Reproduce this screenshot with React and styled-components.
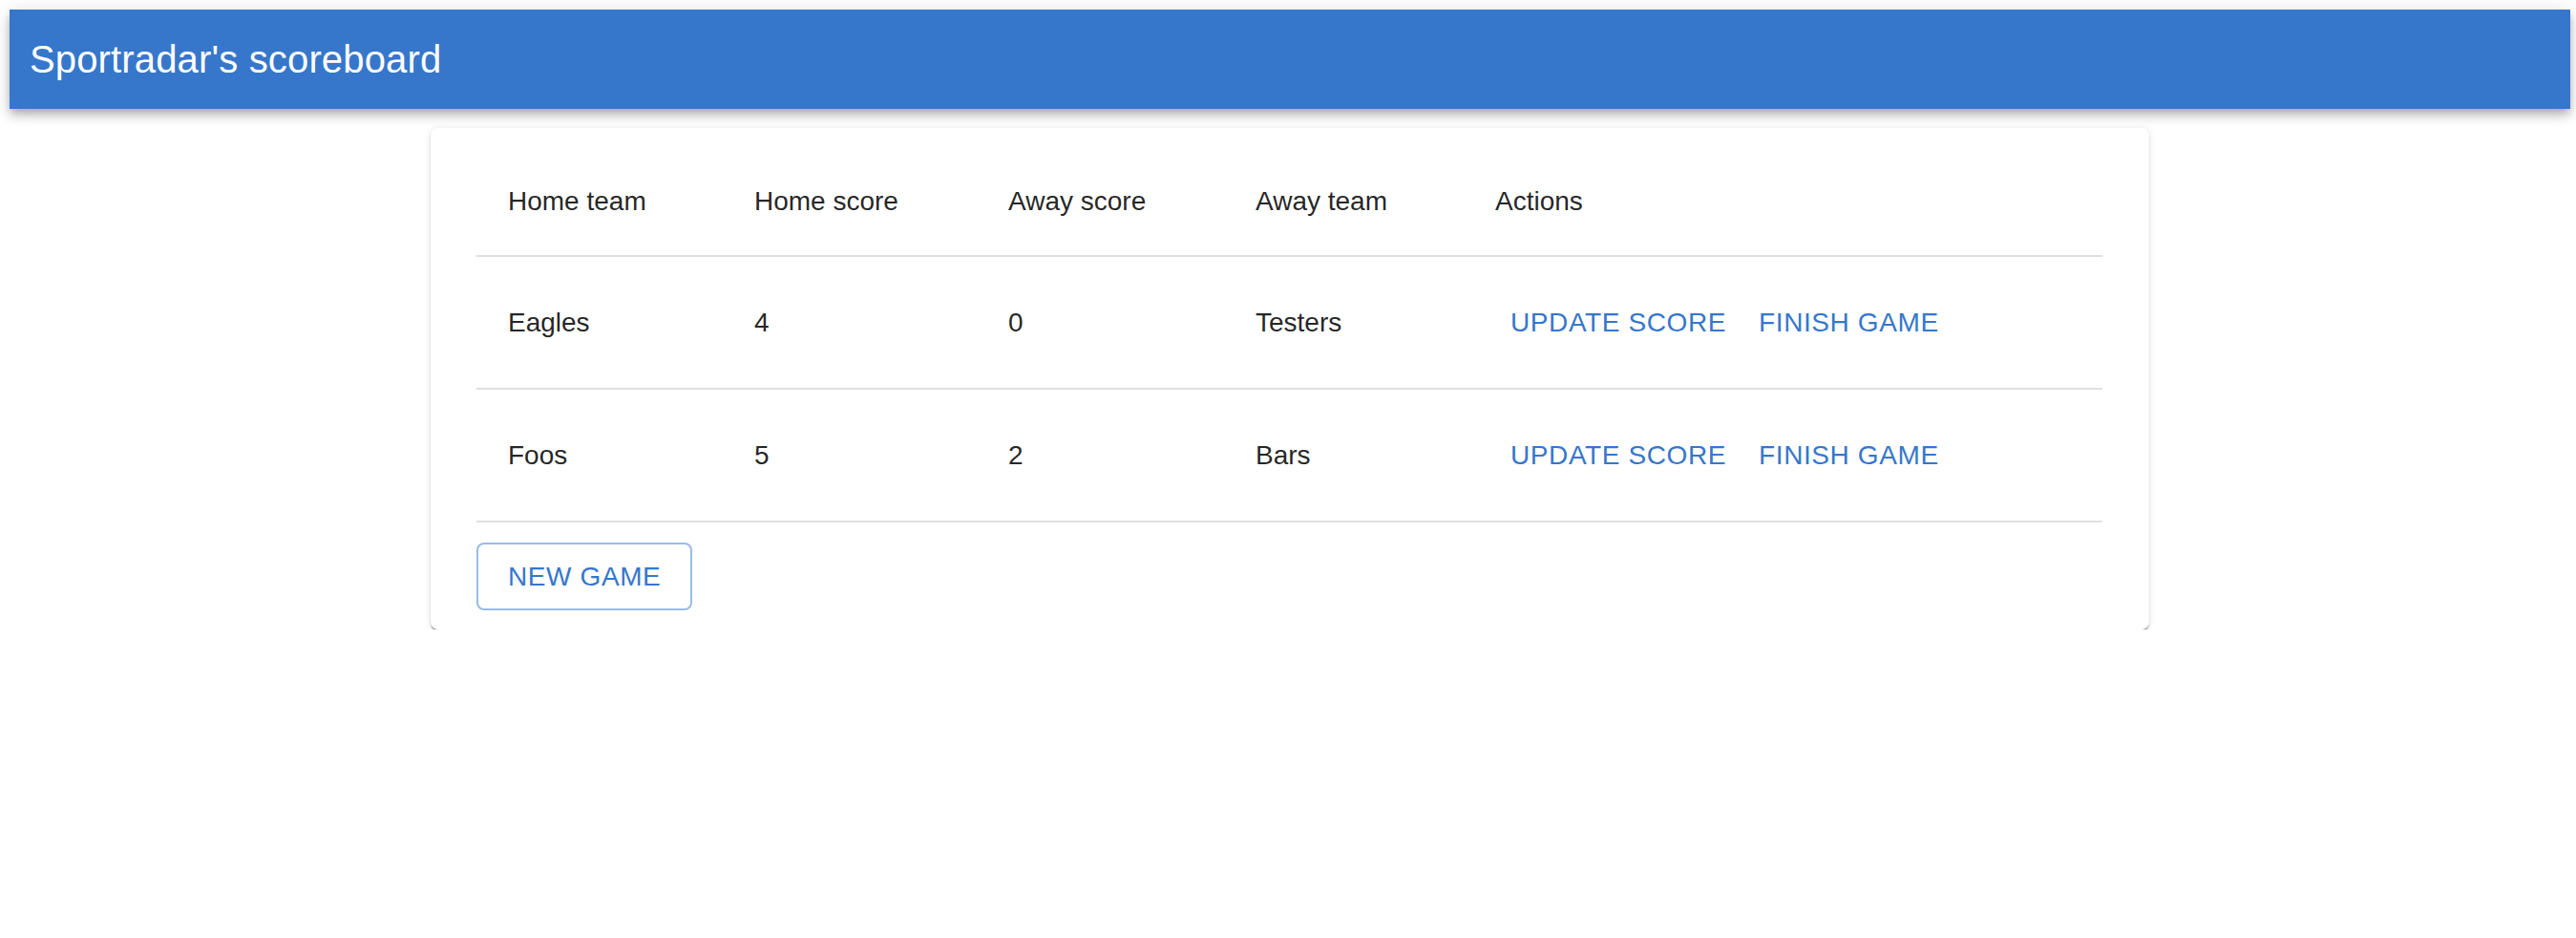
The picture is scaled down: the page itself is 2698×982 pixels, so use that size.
import React from "react"
import styled, { createGlobalStyle } from "styled-components"

const GlobalStyle = createGlobalStyle`
  body {
    margin: 0;
    background: #ffffff;
    font-family: "Liberation Sans", Arial, Helvetica, sans-serif;
  }
`

const BLUE = "#3677cb"

const Page = styled.div`
  padding: 10px 6px 0 10px;
`

const AppBar = styled.header`
  height: 104px;
  display: flex;
  align-items: center;
  padding: 0 21px;
  background: ${BLUE};
  color: #ffffff;
  box-shadow: 0 4px 8px -2px rgba(0, 0, 0, 0.2), 0 8px 10px 0 rgba(0, 0, 0, 0.14),
    0 2px 20px 0 rgba(0, 0, 0, 0.12);
`

const Title = styled.h1`
  margin: 0;
  font-size: 40px;
  font-weight: 400;
  letter-spacing: 0.15px;
`

const Main = styled.main`
  display: flex;
  justify-content: center;
  padding-top: 20px;
`

const Card = styled.section`
  width: 1800px;
  box-sizing: border-box;
  padding: 20px 49px 20px 48px;
  background: #ffffff;
  border-radius: 8px;
  box-shadow: 0 3px 1px -1px rgba(0, 0, 0, 0.3), 0 2px 2px 0 rgba(0, 0, 0, 0.14),
    0 1px 6px 0 rgba(0, 0, 0, 0.12);
`

const Table = styled.table`
  width: 100%;
  border-collapse: collapse;
  table-layout: fixed;
  color: rgba(0, 0, 0, 0.87);
  font-size: 28px;
`

const HeadCell = styled.th`
  box-sizing: border-box;
  width: ${(p) => (p.$w ? `${p.$w}px` : "auto")};
  height: 114px;
  padding: 0 33px;
  text-align: left;
  font-weight: 400;
  border-bottom: 2px solid #e0e0e0;
`

const Cell = styled.td`
  height: 137px;
  padding: 0 33px;
  border-bottom: 2px solid #e0e0e0;
  vertical-align: middle;
  white-space: nowrap;
`

const Actions = styled.div`
  display: flex;
  align-items: center;
`

const TextButton = styled.button`
  height: 73px;
  padding: 0 16px;
  border: none;
  border-radius: 8px;
  background: transparent;
  color: ${BLUE};
  font-family: inherit;
  font-size: 28px;
  letter-spacing: 0.6px;
  text-transform: uppercase;
  white-space: nowrap;
  cursor: pointer;
`

const ActionButton = styled(TextButton)`
  & + & {
    margin-left: 2px;
  }
`

const OutlinedButton = styled(TextButton)`
  height: 71px;
  margin-top: 21px;
  padding: 0 31px;
  border: 2px solid rgba(54, 119, 203, 0.5);
`

const columns = [
  { label: "Home team", w: 258 },
  { label: "Home score", w: 266 },
  { label: "Away score", w: 259 },
  { label: "Away team", w: 251 },
  { label: "Actions" },
]

const games = [
  { home: "Eagles", homeScore: 4, awayScore: 0, away: "Testers" },
  { home: "Foos", homeScore: 5, awayScore: 2, away: "Bars" },
]

const App = () => {
  return (
    <Page>
      <GlobalStyle />
      <AppBar>
        <Title>Sportradar's scoreboard</Title>
      </AppBar>
      <Main>
        <Card>
          <Table>
            <thead>
              <tr>
                {columns.map((c) => (
                  <HeadCell key={c.label} $w={c.w}>
                    {c.label}
                  </HeadCell>
                ))}
              </tr>
            </thead>
            <tbody>
              {games.map((g) => (
                <tr key={g.home}>
                  <Cell>{g.home}</Cell>
                  <Cell>{g.homeScore}</Cell>
                  <Cell>{g.awayScore}</Cell>
                  <Cell>{g.away}</Cell>
                  <Cell>
                    <Actions>
                      <ActionButton>Update score</ActionButton>
                      <ActionButton>Finish game</ActionButton>
                    </Actions>
                  </Cell>
                </tr>
              ))}
            </tbody>
          </Table>
          <OutlinedButton>New game</OutlinedButton>
        </Card>
      </Main>
    </Page>
  )
}

export default App
